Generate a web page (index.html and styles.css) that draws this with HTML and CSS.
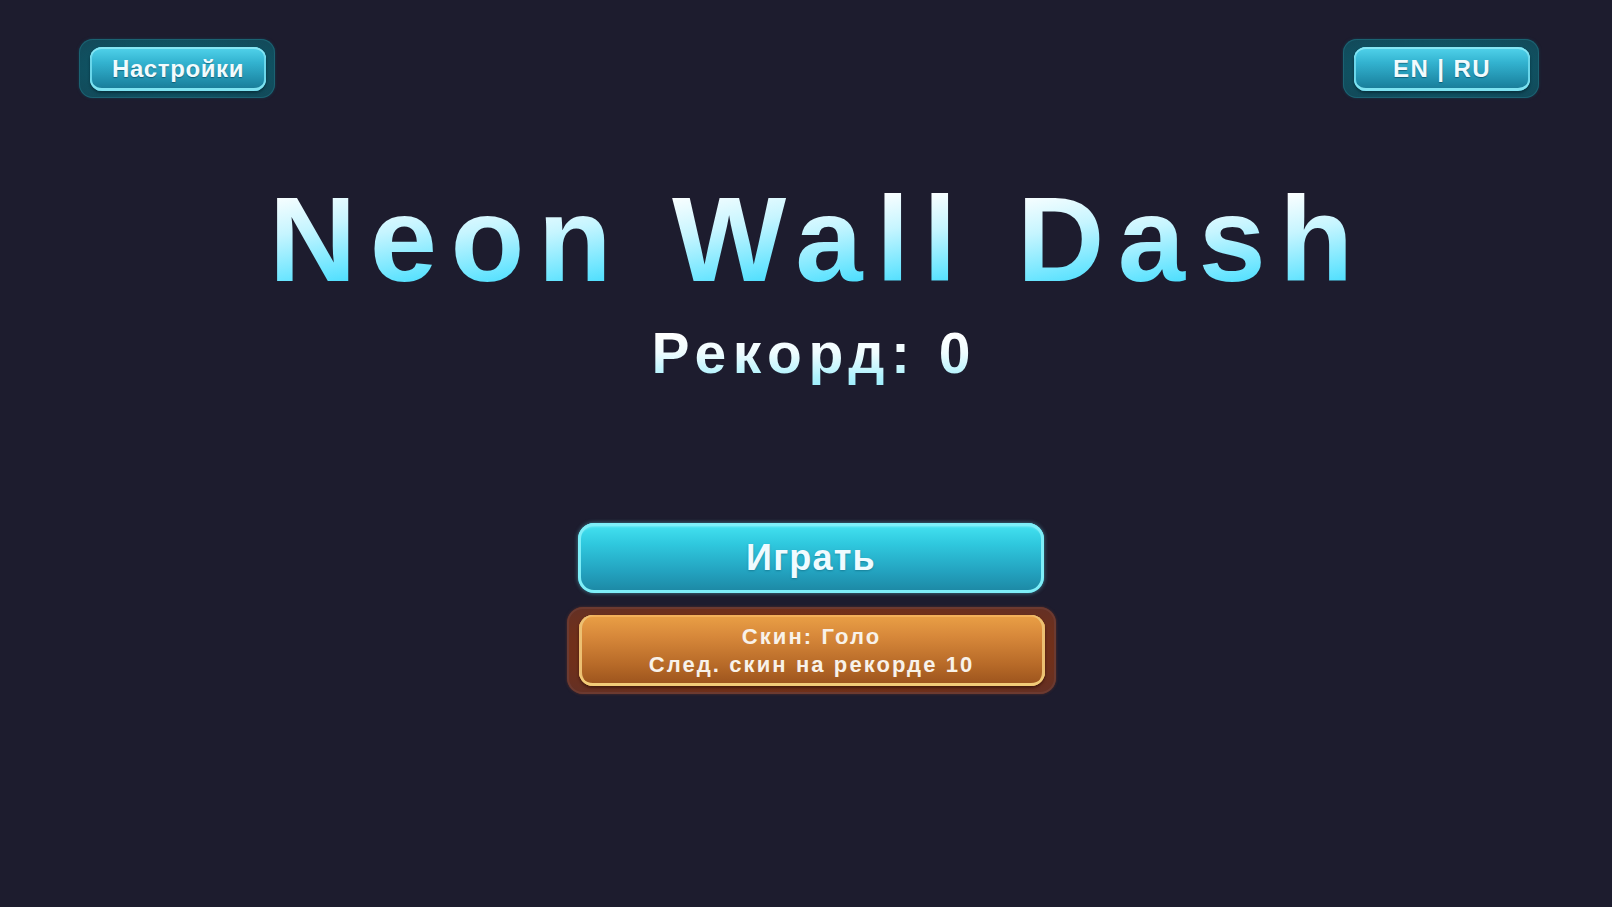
FILE: index.html
```html
<!DOCTYPE html>
<html lang="ru">
<head>
<meta charset="utf-8">
<title>Neon Wall Dash</title>
<link rel="stylesheet" href="styles.css">
</head>
<body>
<div class="screen">
  <header class="topbar">
    <div class="frame frame-teal"><button class="btn btn-teal">Настройки</button></div>
    <div class="frame frame-teal"><button class="btn btn-teal btn-lang">EN | RU</button></div>
  </header>
  <main class="menu">
    <h1 class="title"><span>N</span><span>e</span><span>o</span><span>n</span><span> </span><span>W</span><span>a</span><span>l</span><span>l</span><span> </span><span>D</span><span>a</span><span>s</span><span>h</span></h1>
    <div class="record"><span>Р</span><span>е</span><span>к</span><span>о</span><span>р</span><span>д</span><span>:</span><span> </span><span>0</span></div>
    <button class="play">Играть</button>
    <div class="frame frame-brown">
      <button class="skin"><span>Скин: Голо</span><span>След. скин на рекорде 10</span></button>
    </div>
  </main>
</div>
</body>
</html>
```

FILE: styles.css
```css
html, body {
  margin: 0;
  padding: 0;
  background: #1d1c2e;
}
.screen {
  width: 1612px;
  height: 907px;
  overflow: hidden;
  font-family: "Liberation Sans", Arial, sans-serif;
  font-weight: bold;
  color: #f2fbfd;
}
.topbar {
  display: flex;
  justify-content: space-between;
  padding: 39px 73px 0 79px;
}
button {
  font-family: inherit;
  font-weight: bold;
  border: none;
  cursor: pointer;
  padding: 0;
}
.frame-teal {
  width: 196px;
  height: 59px;
  box-sizing: border-box;
  padding: 8px 9px 7px 11px;
  border-radius: 14px;
  background: radial-gradient(ellipse at center, #105a6b 0%, #0f5262 60%, #134858 100%);
  box-shadow: inset 0 0 0 1px #1b6272, 0 0 3px rgba(20, 90, 110, 0.5);
}
.btn-teal {
  width: 176px;
  height: 44px;
  border-radius: 12px;
  background: linear-gradient(#52d4ec 0%, #33b3d0 35%, #1c86a3 85%, #1a7893 100%);
  box-shadow: inset 0 -3px 0 #7ee3f1, inset 0 2px 0 #86e6f4, inset 2px 0 0 #6ad6ea, inset -2px 0 0 #6ad6ea, 0 2px 3px rgba(0, 30, 40, 0.6);
  color: #f2fbfd;
  font-size: 24px;
  letter-spacing: 0.6px;
  line-height: 44px;
  text-shadow: 0 1px 1px rgba(0, 50, 70, 0.5);
}
.btn-lang {
  letter-spacing: 1.4px;
}
.menu {
  display: flex;
  flex-direction: column;
  align-items: center;
  padding-left: 10px;
}
.title {
  margin: 81px 0 0;
  font-size: 121px;
  line-height: 121px;
  letter-spacing: 13.4px;
  padding-left: 13.4px;
  font-weight: bold;
  color: #bff4ff;
}
.title span {
  background: linear-gradient(168deg, #ffffff 0%, #ffffff 14%, #c6f5ff 42%, #6fe6ff 70%, #45dcfd 84%, #3ab8f4 100%);
  -webkit-background-clip: text;
  background-clip: text;
  color: transparent;
}
.record {
  margin-top: 25px;
  font-size: 57px;
  line-height: 57px;
  letter-spacing: 6.5px;
  padding-left: 6.5px;
  color: #f2fdff;
}
.record span {
  background: linear-gradient(#ffffff 0%, #ffffff 20%, #eefcff 50%, #aef2fd 88%, #a0eefc 100%);
  -webkit-background-clip: text;
  background-clip: text;
  color: transparent;
}
.play {
  margin-top: 141px;
  width: 466px;
  height: 70px;
  border-radius: 16px;
  background: linear-gradient(#45e4f2 0%, #2fc8de 30%, #23a2bf 70%, #1c86a2 100%);
  box-shadow: inset 0 0 0 3px #7eeef8, inset 0 4px 2px rgba(180, 250, 255, 0.4), 0 0 4px rgba(110, 230, 245, 0.5);
  color: #f0fbff;
  font-size: 36px;
  letter-spacing: 1.2px;
  line-height: 70px;
  text-shadow: 0 1px 2px rgba(0, 60, 80, 0.35);
}
.frame-brown {
  margin-top: 14px;
  width: 489px;
  height: 87px;
  box-sizing: border-box;
  padding: 8px 11px 8px 12px;
  border-radius: 16px;
  background: radial-gradient(ellipse at center, #7c3412 0%, #70301a 70%, #623026 100%);
  box-shadow: inset 0 0 0 2px #6c3a30, 0 0 3px rgba(120, 60, 40, 0.6);
}
.skin {
  width: 466px;
  height: 71px;
  border-radius: 14px;
  display: flex;
  flex-direction: column;
  align-items: center;
  justify-content: center;
  background: linear-gradient(#eaa046 0%, #d7883a 30%, #b76a28 70%, #9a521c 100%);
  box-shadow: inset 0 -3px 0 #f2cc78, inset 3px 0 0 #ecc072, inset -3px 0 0 #ecc072, inset 0 2px 0 #f3b05a, 0 2px 3px rgba(40, 10, 0, 0.6);
  color: #f8f2ea;
  font-size: 22px;
  line-height: 28px;
  letter-spacing: 2.1px;
  padding-top: 1px;
}
```
